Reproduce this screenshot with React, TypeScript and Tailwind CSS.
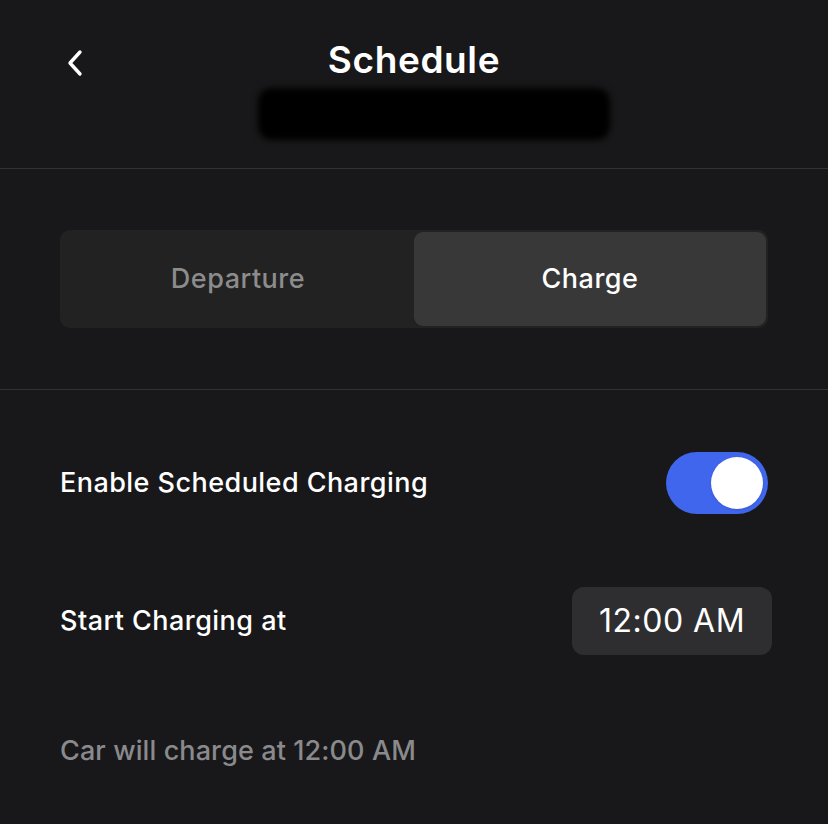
import { useState } from 'react';

export default function App() {
  const [tab, setTab] = useState<'departure' | 'charge'>('charge');
  const [enabled, setEnabled] = useState(true);

  return (
    <div
      className="w-[828px] h-[824px] bg-[#18181a] text-white overflow-hidden"
      style={{ fontFamily: 'Inter, "Noto Sans", sans-serif' }}
    >
      {/* header */}
      <div className="relative h-[169px] border-b border-[#333335] flex flex-col items-center">
        <button className="absolute left-[60px] top-[46px] w-[30px] h-[34px] flex items-center justify-center">
          <svg width="18" height="28" viewBox="0 0 18 28" fill="none">
            <path d="M14 3 L4 14 L14 25" stroke="white" strokeWidth="3.4" strokeLinecap="round" strokeLinejoin="round" />
          </svg>
        </button>
        <h1 className="mt-[36px] text-[37px] leading-[48px] font-semibold tracking-[0.6px]">Schedule</h1>
        {/* redacted subtitle */}
        <div className="mt-[4px] ml-[40px] w-[352px] h-[52px] rounded-[14px] bg-black blur-[3px]"></div>
      </div>

      {/* segmented control */}
      <div className="h-[221px] border-b border-[#333335] px-[60px] pt-[61px]">
        <div className="h-[98px] rounded-[10px] bg-[#222222] flex p-[2px]">
          <button
            onClick={() => setTab('departure')}
            className={`flex-1 rounded-[9px] text-[27px] tracking-[0.5px] font-medium ${tab === 'departure' ? 'bg-[#383838] text-white' : 'text-[#8c8c8c]'}`}
          >
            Departure
          </button>
          <button
            onClick={() => setTab('charge')}
            className={`flex-1 rounded-[9px] text-[27px] tracking-[0.5px] font-medium ${tab === 'charge' ? 'bg-[#383838] text-white' : 'text-[#8c8c8c]'}`}
          >
            Charge
          </button>
        </div>
      </div>

      {/* settings */}
      <div className="px-[60px]">
        <div className="h-[186px] flex items-center justify-between">
          <span className="text-[27px] tracking-[0.45px] font-medium">Enable Scheduled Charging</span>
          <button
            onClick={() => setEnabled(!enabled)}
            className={`w-[102px] h-[62px] rounded-full p-[5px] flex ${enabled ? 'bg-[#4066ee] justify-end' : 'bg-[#3a3a3c] justify-start'}`}
          >
            <span className="w-[52px] h-[52px] rounded-full bg-white shadow"></span>
          </button>
        </div>
        <div className="h-[68px] mt-[11px] flex items-center justify-between">
          <span className="text-[27px] tracking-[0.45px] font-medium">Start Charging at</span>
          <button className="-mr-[4px] w-[200px] h-[68px] rounded-[12px] bg-[#2e2e30] text-[32px] tracking-[0.5px] font-normal">12:00 AM</button>
        </div>
        <p className="mt-[78px] text-[27px] leading-[36px] tracking-[0.1px] font-medium text-[#8a8a8c]">Car will charge at 12:00 AM</p>
      </div>
    </div>
  );
}
